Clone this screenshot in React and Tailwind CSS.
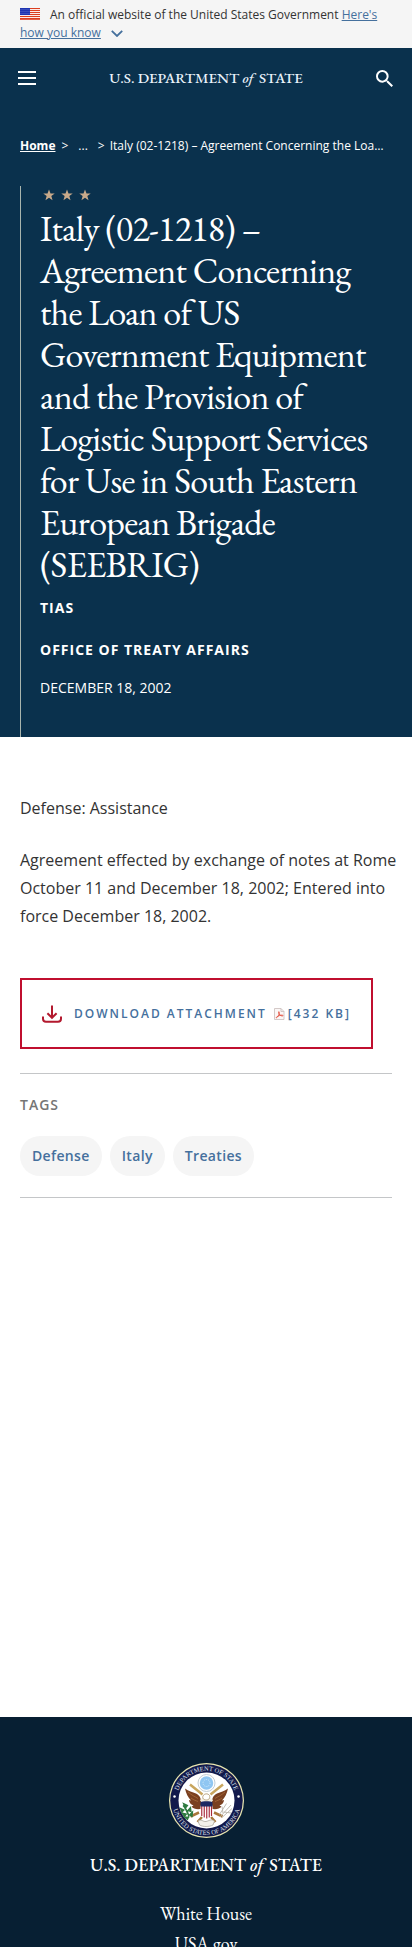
import React from 'react';

const serif = "font-['EB_Garamond','Liberation_Serif',serif]";

function Flag() {
  return (
    <svg viewBox="0 0 20 12" className="mr-[10px] inline-block h-3 w-5 align-[-1px]" aria-hidden="true">
      <rect width="20" height="12" fill="#fff" />
      {[0, 2, 4, 6, 8, 10].map((y) => (
        <rect key={y} y={y} width="20" height="1.1" fill="#db3e1f" />
      ))}
      <rect y="11.2" width="20" height="0.8" fill="#db3e1f" />
      <rect width="10" height="7" fill="#1e33b1" />
      {[1, 3, 5].map((y) =>
        [1, 3, 5, 7, 9].map((x) => <circle key={x + '-' + y} cx={x} cy={y + 0.4} r="0.35" fill="#b9c2f3" />)
      )}
    </svg>
  );
}

function Star() {
  return (
    <svg viewBox="0 0 24 24" className="h-3 w-3" fill="#c8a98a" aria-hidden="true">
      <path d="M12 1l3 8h8.4l-6.7 5.2 2.4 8.5L12 17.6l-7.1 5.1 2.4-8.5L.6 9H9z" />
    </svg>
  );
}

function DownloadIcon() {
  return (
    <svg viewBox="0 0 20 18" className="h-[18px] w-5 shrink-0" fill="none" stroke="#b3192e" strokeWidth="2" aria-hidden="true">
      <path d="M10 0.5v12M5.4 8.2l4.6 4.6 4.6-4.6" />
      <path d="M1 11.5v2.2C1 15.600 2.200 16.800 4 16.800h12c1.800 0 3-1.200 3-3.100v-2.200" />
    </svg>
  );
}

function PdfIcon() {
  return (
    <svg viewBox="0 0 12 12" className="h-3 w-3 shrink-0" fill="none" aria-hidden="true">
      <path d="M1.500 .5h6.500l3 3v8h-9.500z" fill="#fbf7f6" stroke="#c9bdbb" strokeWidth="0.800" />
      <path d="M8 .5v3h3" stroke="#c9bdbb" strokeWidth="0.800" />
      <path d="M3.500 9.800c1.500-.8 3-3.500 2.800-5.500 0-1-1-.8-.8.200.3 1.800 2 3.500 4 3.500.8 0 .6-.9-.3-.9-1.900 0-4.300.8-5.500 1.800-.6.600-.6 1.100-.2.900z" stroke="#e2503f" strokeWidth="0.900" />
    </svg>
  );
}

function Seal() {
  return (
    <svg viewBox="0 0 150 150" className="h-[75px] w-[75px]" role="img" aria-label="Department of State seal">
      <defs>
        <path id="sealTop" d="M15.500 75a59.500 59.500 0 0 1 119 0" />
        <path id="sealBottom" d="M6 75a69 69 0 0 0 138 0" />
      </defs>
      <circle cx="75" cy="75" r="75" fill="#e9e6b0" />
      <circle cx="75" cy="75" r="72.500" fill="#12194b" />
      <circle cx="75" cy="75" r="56" fill="#fff" />
      <text fill="#dfe0ea" fontSize="13" fontFamily="Liberation Serif, serif" textAnchor="middle">
        <textPath href="#sealTop" startOffset="50%">DEPARTMENT OF STATE</textPath>
      </text>
      <text fill="#dfe0ea" fontSize="13" fontFamily="Liberation Serif, serif" textAnchor="middle">
        <textPath href="#sealBottom" startOffset="50%">UNITED STATES OF AMERICA</textPath>
      </text>
      <circle cx="11" cy="67" r="2.500" fill="#fff" />
      <circle cx="139" cy="67" r="2.500" fill="#fff" />
      <circle cx="75" cy="40" r="17" fill="#fff" stroke="#c3cdd5" strokeWidth="2" />
      <circle cx="75" cy="40" r="13.500" fill="#8fc6f2" />
      <circle cx="75" cy="40" r="7" fill="none" stroke="#d6ecfc" strokeWidth="2" strokeDasharray="2 2.400" />
      <path d="M42 43l25 20M108 43L83 63" stroke="#c9a65e" strokeWidth="5" />
      <path d="M32 51c7 5 15 7 22 10 5 2 8 6 9 10l3 20c-8 3-17 1-21-4 2-1 3-1 4-2-6-2-9-7-9-11l4 1c-6-6-10-14-12-24z" fill="#7a4020" />
      <path d="M118 51c-7 5-15 7-22 10-5 2-8 6-9 10l-3 20c8 3 17 1 21-4-2-1-3-1-4-2 6-2 9-7 9-11l-4 1c6-6 10-14 12-24z" fill="#7a4020" />
      <path d="M38 58c8 7 14 9 20 13M44 70c5 4 9 5 14 7M112 58c-8 7-14 9-20 13M106 70c-5 4-9 5-14 7" fill="none" stroke="#a96d3c" strokeWidth="1.500" />
      <path d="M62 75c2-4 8-7 13-7s11 3 13 7c-3 5-23 5-26 0z" fill="#f4efe2" />
      <path d="M68 66c2-5 10-6 13-1 2 4-1 9-6 9s-9-3-7-8z" fill="#fff" stroke="#a48a5e" strokeWidth="1.500" />
      <path d="M60 99l-17 8M90 99l17 8M66 108l-9 10M84 108l9 10" stroke="#a9773b" strokeWidth="5" />
      <path d="M63 85h24v17c0 5-6 8-12 10-6-2-12-5-12-10z" fill="#fff" />
      <path d="M65.500 86v20M70.500 86v23M75.500 86v25M80.500 86v23M85 86v20" stroke="#a92a3a" strokeWidth="2.300" />
      <path d="M63 78c4-2 20-2 24 0v9H63z" fill="#1d2a63" />
      <path d="M40 109c-1-9-5-17-12-24M33 90l-4-9 8 4zM30 94l-7-3 3 7zM38 95l5-6 1 8zM35 102l-9-2 5 7zM41 104l6-6-1 9zM39 108l-8 0 6 5z" fill="#2e7a3f" stroke="#2e7a3f" strokeWidth="2.500" />
      <path d="M102 108l22-24M101 103l14-22M106 109l20-18M108 100l-2-13M110 98l14 2" stroke="#b9b4aa" strokeWidth="1.800" fill="none" />
      <path d="M58 116c6-5 10 2 16 1s10-6 17-1l-3 8c-8 4-20 4-27 0z" fill="#f3f1ea" stroke="#aaa69a" strokeWidth="1.500" />
    </svg>
  );
}

function Wordmark() {
  return (
    <>
      U.S. DEPARTMENT <em className="mr-[2px]">of</em> STATE
    </>
  );
}

const tags = ['Defense', 'Italy', 'Treaties'];

export default function App() {
  return (
    <div className="bg-white font-['Open_Sans',sans-serif] text-[#333]">
      <section className="bg-[#f5f5f5] px-5 py-[6px] text-xs leading-[18px]" aria-label="Official government website">
        <Flag />
        An official website of the United States Government{' '}
        <a href="#how-you-know" className="text-[#45709d]">
          <span className="underline">Here's how you know</span>
          <svg viewBox="0 0 12 7" className="ml-[10px] inline-block h-[7px] w-3" fill="none" stroke="#45709d" strokeWidth="1.800" aria-hidden="true">
            <path d="M.8 .8L6 6 11.200 .8" />
          </svg>
        </a>
      </section>

      <div className="bg-[#0a314d] text-white">
        <header className="flex h-[60px] items-center justify-between px-4">
          <button type="button" aria-label="Menu" className="flex h-6 w-[22px] items-center justify-center">
            <svg viewBox="0 0 18 14" className="h-[14px] w-[18px]" aria-hidden="true">
              <path d="M0 1h18M0 7h18M0 13h18" stroke="#fff" strokeWidth="2" />
            </svg>
          </button>
          <a href="#home" className={`text-[15px] font-medium leading-5 text-[#eaf3fb] ${serif}`}>
            <Wordmark />
          </a>
          <button type="button" aria-label="Search" className="flex h-6 w-[22px] items-center justify-center">
            <svg viewBox="3 3 17.500 17.500" className="h-[17px] w-[17px]" fill="#fff" aria-hidden="true">
              <path d="M15.500 14h-.79l-.28-.27A6.471 6.471 0 0 0 16 9.500 6.500 6.500 0 1 0 9.500 16c1.610 0 3.090-.59 4.230-1.570l.27.28v.79l5 4.990L20.490 19l-4.990-5zm-6 0C7.010 14 5 11.990 5 9.500S7.010 5 9.500 5 14 7.010 14 9.500 11.990 14 9.500 14z" />
            </svg>
          </button>
        </header>

        <nav aria-label="Breadcrumb" className="px-5 pt-7 text-xs leading-5">
          <ol className="flex pr-[5px]">
            <li className="flex">
              <a href="#home" className="font-bold underline">Home</a>
              <span className="ml-[6px]">&gt;</span>
            </li>
            <li className="ml-[10px] flex">
              <span>...</span>
              <span className="ml-[10px]">&gt;</span>
            </li>
            <li className="ml-[5px] min-w-0 flex-1 truncate">
              Italy (02-1218) – Agreement Concerning the Loan of US Government Equipment
            </li>
          </ol>
        </nav>

        <div className="px-5 pt-[30px]">
          <div className="border-l border-[#a9b5ae] pb-[39px] pl-[19px] pt-[3px]">
            <div className="flex gap-[6px] pl-[3px]">
              <Star />
              <Star />
              <Star />
            </div>
            <h1 className={`pt-[7px] text-4xl leading-[42px] tracking-[-0.02em] ${serif}`}>
              Italy (02-1218) – Agreement Concerning the Loan of US Government Equipment and the Provision of Logistic Support Services for Use in South Eastern European Brigade (SEEBRIG)
            </h1>
            <p className="pt-3 text-sm font-bold leading-5 tracking-[1px]">TIAS</p>
            <p className="pt-[22px] text-sm font-bold leading-5 tracking-[1px]">OFFICE OF TREATY AFFAIRS</p>
            <p className="pt-[18px] text-sm leading-5">DECEMBER 18, 2002</p>
          </div>
        </div>
      </div>

      <main className="min-h-[980px] px-5 pt-[57px]">
        <div className="-mr-3 flex flex-col gap-6 text-base leading-7">
          <p>Defense: Assistance</p>
          <p>Agreement effected by exchange of notes at Rome October 11 and December 18, 2002; Entered into force December 18, 2002.</p>
        </div>

        <a href="#attachment" className="mt-12 inline-flex h-[71px] items-center border-2 border-[#c00f2f] px-5 text-xs font-semibold tracking-[2px] text-[#45709d]">
          <DownloadIcon />
          <span className="ml-3">DOWNLOAD ATTACHMENT</span>
          <span className="ml-[6px] flex items-center gap-[3px]">
            <PdfIcon />
            [432 KB]
          </span>
        </a>

        <section className="mt-[24px] border-y border-[#c4c6c8] pb-[21px] pt-[21px]">
          <h2 className="text-sm font-semibold leading-5 tracking-[1px] text-[#757575]">TAGS</h2>
          <ul className="mt-[21px] flex flex-wrap gap-2">
            {tags.map((tag) => (
              <li key={tag}>
                <a href={'#' + tag.toLowerCase()} className="block rounded-full bg-[#f5f5f5] px-3 py-[10px] text-sm font-semibold leading-5 tracking-wide text-[#45709d]">
                  {tag}
                </a>
              </li>
            ))}
          </ul>
        </section>
      </main>

      <footer className={`flex flex-col items-center bg-[#071f33] pt-[46px] text-white ${serif}`}>
        <Seal />
        <p className="mt-[15px] text-lg font-medium leading-6">
          <Wordmark />
        </p>
        <ul className="mt-[22px] text-center text-lg leading-[30px]">
          <li><a href="#white-house">White House</a></li>
          <li><a href="#usa-gov">USA.gov</a></li>
        </ul>
      </footer>
    </div>
  );
}
